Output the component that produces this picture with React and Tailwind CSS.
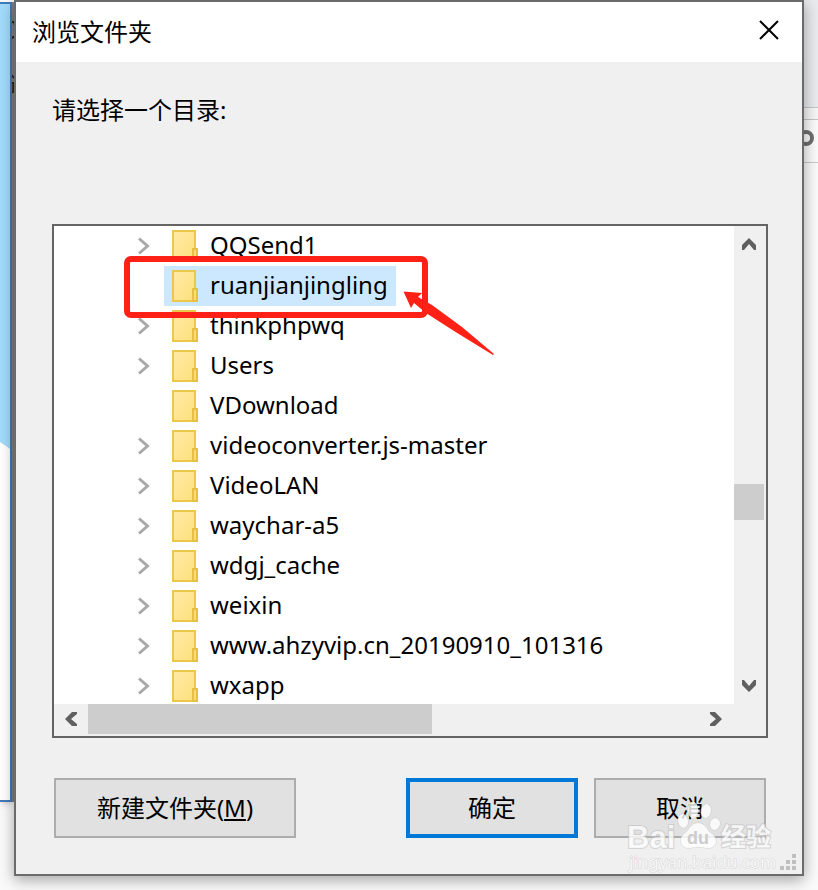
import { useState } from "react";

const folders = [
  { name: "QQSend1", expandable: true },
  { name: "ruanjianjingling", expandable: false },
  { name: "thinkphpwq", expandable: true },
  { name: "Users", expandable: true },
  { name: "VDownload", expandable: false },
  { name: "videoconverter.js-master", expandable: true },
  { name: "VideoLAN", expandable: true },
  { name: "waychar-a5", expandable: true },
  { name: "wdgj_cache", expandable: true },
  { name: "weixin", expandable: true },
  { name: "www.ahzyvip.cn_20190910_101316", expandable: true },
  { name: "wxapp", expandable: true },
];

function FolderIcon() {
  return (
    <svg width="26" height="32" viewBox="0 0 26 32" className="shrink-0" aria-hidden="true">
      <defs>
        <linearGradient id="folder" x1="0" y1="0" x2="1" y2="1">
          <stop offset="0" stopColor="#ffeaa6" />
          <stop offset="1" stopColor="#fde07c" />
        </linearGradient>
      </defs>
      <rect x="1" y="1" width="22" height="30" fill="url(#folder)" stroke="#ecc84a" strokeWidth="2" />
      <rect x="21" y="19" width="4" height="12" fill="#fbdc72" stroke="#e6c043" strokeWidth="2" />
    </svg>
  );
}

function ExpandIcon() {
  return (
    <svg width="12" height="18" viewBox="0 0 12 18" aria-hidden="true">
      <path d="M1 1.5 L9.5 9 L1 16.5" fill="none" stroke="#a9a9a9" strokeWidth="3" />
    </svg>
  );
}

function ScrollArrow({ className }) {
  return (
    <svg width="14" height="12" viewBox="0 0 14 12" className={className} aria-hidden="true">
      <path d="M0 7 L7 0 L14 7 V12 H12 L7 6 L2 12 H0 Z" fill="#606060" />
    </svg>
  );
}

function FolderRow({ folder, selected, onSelect }) {
  return (
    <li className="flex h-10 shrink-0 items-center">
      <div className="flex w-[110px] shrink-0 justify-end pr-[14px]">
        {folder.expandable && (
          <button type="button" aria-label={`展开 ${folder.name}`}>
            <ExpandIcon />
          </button>
        )}
      </div>
      <button
        type="button"
        onClick={onSelect}
        className={
          selected
            ? "flex h-10 items-center gap-3 whitespace-nowrap bg-[#cce8ff] px-2"
            : "flex h-10 items-center gap-3 whitespace-nowrap px-2"
        }
      >
        <FolderIcon />
        <span className="pb-0.5">{folder.name}</span>
      </button>
    </li>
  );
}

function FolderTree() {
  const [selected, setSelected] = useState("ruanjianjingling");

  return (
    <div className="border-2 border-[#646464] bg-[#f0f0f0]">
      <div className="flex">
        <ul className="h-[478px] min-w-0 flex-1 overflow-hidden bg-white">
          {folders.map((folder) => (
            <FolderRow
              key={folder.name}
              folder={folder}
              selected={selected === folder.name}
              onSelect={() => setSelected(folder.name)}
            />
          ))}
        </ul>
        <div className="flex w-8 flex-col pr-[2px]">
          <button type="button" aria-label="向上滚动" className="flex h-9 items-center justify-center">
            <ScrollArrow />
          </button>
          <div className="flex flex-1 flex-col pt-[222px]">
            <div className="h-9 bg-[#cdcdcd]" />
          </div>
          <button type="button" aria-label="向下滚动" className="flex h-9 items-center justify-center">
            <ScrollArrow className="rotate-180" />
          </button>
        </div>
      </div>
      <div className="flex h-8 pr-8 pb-[2px]">
        <button type="button" aria-label="向左滚动" className="flex w-[34px] items-center justify-center">
          <ScrollArrow className="-rotate-90" />
        </button>
        <div className="flex flex-1">
          <div className="w-[344px] bg-[#cdcdcd]" />
        </div>
        <button type="button" aria-label="向右滚动" className="flex w-9 items-center justify-center">
          <ScrollArrow className="rotate-90" />
        </button>
      </div>
    </div>
  );
}

function Annotation() {
  return (
    <svg
      width="374"
      height="104"
      viewBox="0 0 374 104"
      className="pointer-events-none absolute top-[30px] left-[70px]"
      aria-hidden="true"
    >
      <rect x="5" y="5" width="298" height="56" rx="4" fill="none" stroke="#ff2016" strokeWidth="6" />
      <path d="M281.500 37.500 L300 39 L296 43 L310 51 L340 73 L372 100 L371 101 L332 77 L304 59 L292 49 L289 54 Z" fill="#ff2016" />
    </svg>
  );
}

function Watermark() {
  return (
    <svg
      width="156"
      height="76"
      viewBox="0 0 156 76"
      className="pointer-events-none absolute right-[26px] bottom-0"
      aria-hidden="true"
    >
      <g fill="#ffffff" fillOpacity="0.8" stroke="#c0c0c0" strokeOpacity="0.6" paintOrder="stroke">
        <text x="7" y="50" fontSize="31" fontWeight="700" fontFamily="'Liberation Sans', sans-serif" strokeWidth="2">
          Bai
        </text>
        <ellipse cx="63" cy="23" rx="5" ry="7" transform="rotate(-12 63 23)" />
        <ellipse cx="73" cy="12" rx="5" ry="8" />
        <ellipse cx="86" cy="13" rx="5" ry="7" transform="rotate(12 86 13)" />
        <ellipse cx="95" cy="26" rx="5" ry="6" transform="rotate(15 95 26)" />
        <path d="M78 25 C85 25 86 31 91 35 C96 39 98 44 94 48 C90 52 84 49 78 49 C72 49 67 52 63 48 C59 44 60 39 65 35 C70 31 71 25 78 25 Z" />
        <text x="101" y="48" fontSize="25" fontWeight="700" fontFamily="'Noto Sans CJK SC', sans-serif" strokeWidth="2">
          经验
        </text>
        <text x="9" y="70" fontSize="17" fontFamily="'Noto Sans', sans-serif" strokeWidth="1">
          jingyan.baidu.com
        </text>
      </g>
      <text x="67" y="46" fontSize="18" fontWeight="700" fontFamily="'Liberation Sans', sans-serif" fill="#cccccc">
        du
      </text>
    </svg>
  );
}

function ResizeGrip() {
  return (
    <svg width="16" height="16" viewBox="0 0 16 16" className="absolute right-[6px] bottom-1" aria-hidden="true">
      <path
        d="M12 0h4v4h-4z M6 6h4v4h-4z M12 6h4v4h-4z M0 12h4v4h-4z M6 12h4v4h-4z M12 12h4v4h-4z"
        fill="#bfbfbf"
      />
    </svg>
  );
}

function BackgroundWindows() {
  return (
    <div className="absolute inset-0 overflow-hidden bg-[#fafafa]" aria-hidden="true">
      <div className="absolute top-0 right-0 h-[107px] w-10 bg-[#e8eaee]" />
      <div className="absolute top-[107px] right-0 h-[13px] w-10 border-y border-[#c4c4c4] bg-[#f5f5f5]" />
      <div className="absolute top-[162px] right-0 h-px w-10 bg-[#c8c8c8]" />
      <div className="absolute top-[130px] right-1 size-4 rounded-full border-4 border-[#6e6e6e]" />
      <div className="absolute top-[2px] left-0 h-[800px] w-[14px] bg-[#808080] shadow-md" />
      <span className="absolute top-3 left-2 text-[#222222]">文</span>
      <span className="absolute top-[68px] left-2 text-[#222222]">选</span>
      <div className="absolute top-[2px] left-0 h-[800px] w-3 border-2 border-l-0 border-[#4379b8] bg-white">
        <svg width="10" height="445" viewBox="0 0 10 445" preserveAspectRatio="none">
          <path d="M0 0 H10 V445 L6 442 L0 438 Z" fill="#a3dbfa" />
        </svg>
      </div>
    </div>
  );
}

function App() {
  return (
    <div className="relative px-[14px] pb-[14px] font-['Noto_Sans','Noto_Sans_CJK_SC',sans-serif] text-2xl text-black">
      <BackgroundWindows />
      <div
        role="dialog"
        aria-labelledby="dialog-title"
        className="relative border-2 border-[#6b6b6b] bg-[#f0f0f0] shadow-[0_4px_14px_rgba(0,0,0,0.35)]"
      >
        <header className="flex h-[60px] items-center justify-between bg-white pl-4">
          <h1 id="dialog-title">浏览文件夹</h1>
          <button type="button" aria-label="关闭" className="flex h-full w-[66px] items-center justify-center pb-1">
            <svg width="20" height="20" viewBox="0 0 20 20" aria-hidden="true">
              <path d="M1 1 L19 19 M19 1 L1 19" stroke="#000000" strokeWidth="2" />
            </svg>
          </button>
        </header>

        <main className="pr-[34px] pb-9 pl-9">
          <p className="h-[162px] pt-8">请选择一个目录:</p>

          <div className="relative">
            <FolderTree />
            <Annotation />
          </div>

          <div className="mt-10 flex justify-between px-[2px]">
            <button type="button" className="h-[60px] w-[242px] border-2 border-[#adadad] bg-[#e1e1e1]">
              新建文件夹(<span className="underline underline-offset-2">M</span>)
            </button>
            <div className="flex gap-4">
              <button type="button" className="h-[60px] w-[172px] border-4 border-[#0078d7] bg-[#e1e1e1]">
                确定
              </button>
              <button type="button" className="h-[60px] w-[172px] border-2 border-[#adadad] bg-[#e1e1e1]">
                取消
              </button>
            </div>
          </div>
        </main>

        <Watermark />
        <ResizeGrip />
      </div>
    </div>
  );
}

export default App;
